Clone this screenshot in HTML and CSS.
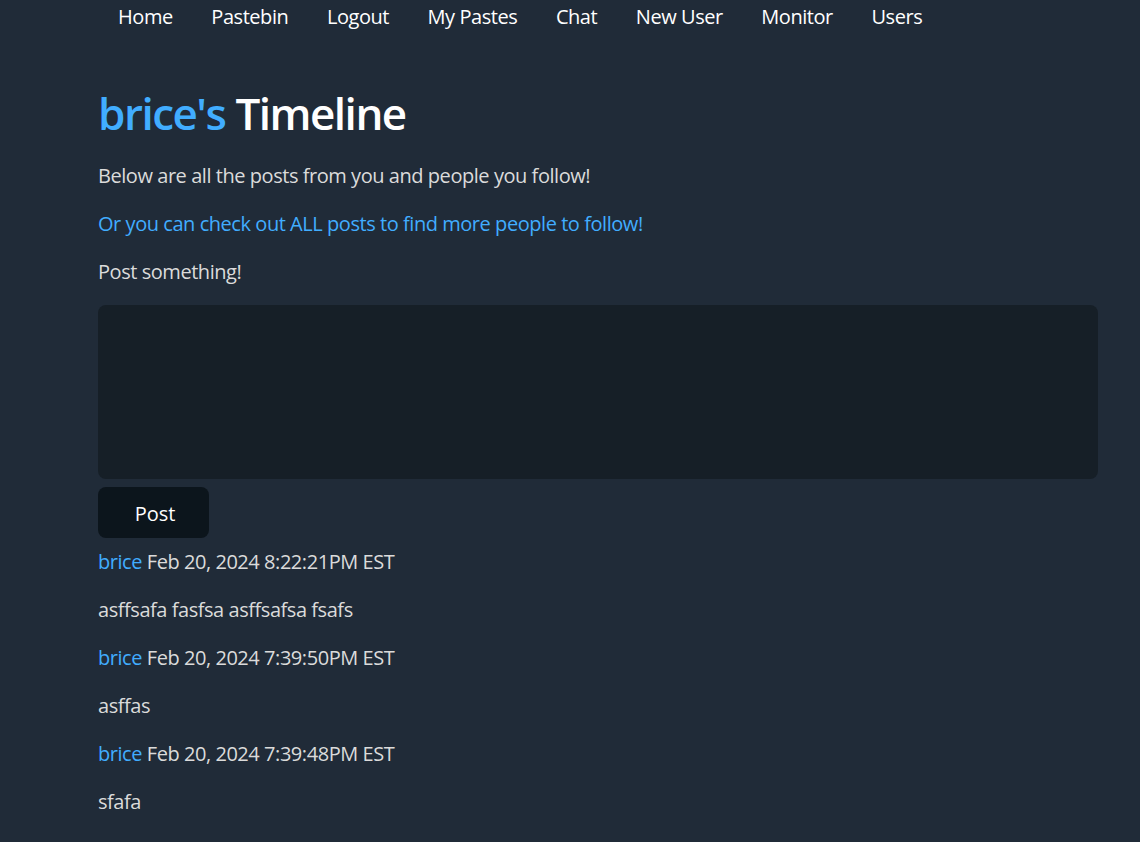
FILE: index.html
```html
<!DOCTYPE html>
<html lang="en">
<head>
<meta charset="utf-8">
<title>brice's Timeline</title>
<link rel="stylesheet" href="styles.css">
</head>
<body>
<div class="page">
  <nav class="nav">
    <a href="#">Home</a>
    <a href="#">Pastebin</a>
    <a href="#">Logout</a>
    <a href="#">My Pastes</a>
    <a href="#">Chat</a>
    <a href="#">New User</a>
    <a href="#">Monitor</a>
    <a href="#">Users</a>
  </nav>
  <h1 class="title"><span class="user">brice's</span> Timeline</h1>
  <p>Below are all the posts from you and people you follow!</p>
  <p><a class="link" href="#">Or you can check out ALL posts to find more people to follow!</a></p>
  <p class="prompt">Post something!</p>
  <form class="post-form">
    <textarea class="post-input"></textarea>
    <button class="post-btn" type="button">Post</button>
  </form>
  <div class="posts">
    <p><a class="link" href="#">brice</a> Feb 20, 2024 8:22:21PM EST</p>
    <p>asffsafa fasfsa asffsafsa fsafs</p>
    <p><a class="link" href="#">brice</a> Feb 20, 2024 7:39:50PM EST</p>
    <p>asffas</p>
    <p><a class="link" href="#">brice</a> Feb 20, 2024 7:39:48PM EST</p>
    <p>sfafa</p>
  </div>
</div>
</body>
</html>
```
FILE: styles.css
```css
html, body {
  margin: 0;
  padding: 0;
}
body {
  background: #202b38;
  color: #dbdbdb;
  font-family: "Open Sans", "Noto Sans", sans-serif;
  font-size: 20px;
  line-height: 28px;
  letter-spacing: -0.45px;
}
.page {
  width: 1000px;
  margin-left: 98px;
}
.nav {
  display: flex;
  height: 34px;
  align-items: center;
}
.nav a {
  color: #ffffff;
  text-decoration: none;
  padding: 0 19.3px;
}
.nav a:first-child {
  padding-left: 20px;
}
.title {
  margin: 48px 0 18px;
  font-size: 44px;
  line-height: 62px;
  font-weight: 600;
  letter-spacing: -1.5px;
  color: #ffffff;
}
.user {
  color: #41adff;
}
p {
  margin: 0 0 20px;
}
.prompt {
  margin-bottom: 19px;
}
.link {
  color: #41adff;
  text-decoration: none;
}
.post-form {
  margin: 0;
}
.post-input {
  display: block;
  box-sizing: border-box;
  width: 1000px;
  height: 174px;
  margin: 0 0 8px;
  border: none;
  border-radius: 8px;
  background: #161f27;
  color: #dbdbdb;
  font: inherit;
  padding: 10px;
  resize: none;
}
.post-btn {
  display: block;
  width: 111px;
  height: 51px;
  margin: 0 0 10px;
  border: none;
  border-radius: 8px;
  background: #0c151c;
  color: #ffffff;
  font: inherit;
  padding: 3px 0 0 3px;
}
```
